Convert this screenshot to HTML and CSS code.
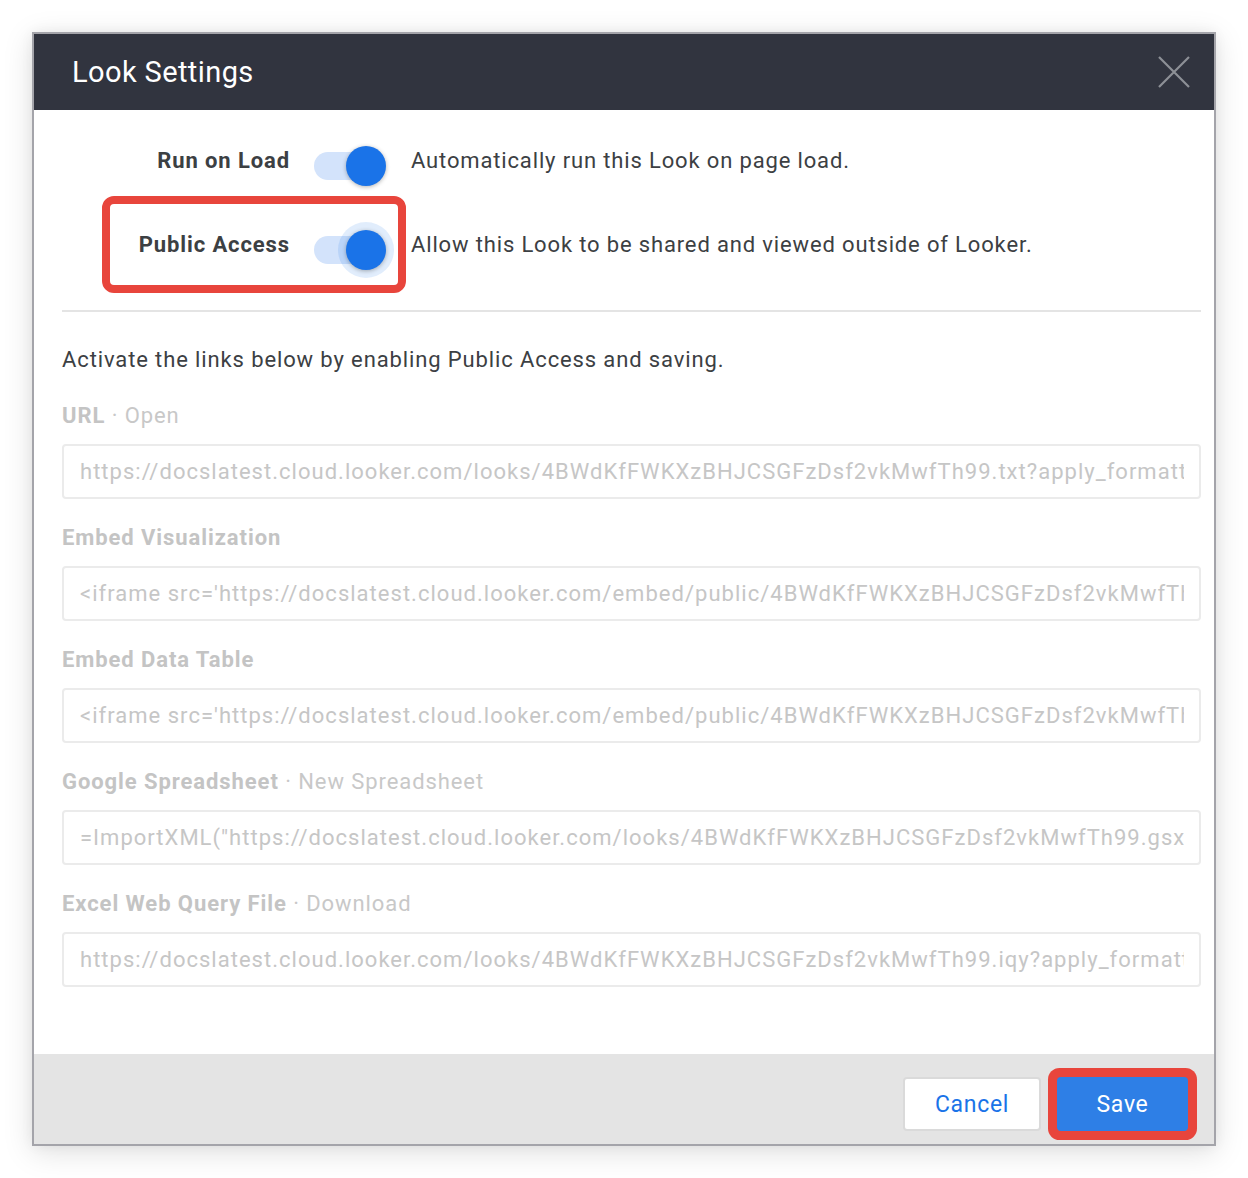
FILE: index.html
```html
<!DOCTYPE html>
<html lang="en">
<head>
<meta charset="utf-8">
<title>Look Settings</title>
<link rel="stylesheet" href="styles.css">
</head>
<body>
<div class="dialog">
  <header class="dialog-header">
    <h1 class="dialog-title">Look Settings</h1>
    <button class="close-btn" aria-label="Close">
      <svg width="32" height="32" viewBox="0 0 32 32"><path d="M1 1 L31 31 M31 1 L1 31" stroke="#8d9096" stroke-width="2.2" fill="none"/></svg>
    </button>
  </header>
  <main class="dialog-body">
    <div class="toggle-row">
      <div class="toggle-label">Run on Load</div>
      <div class="toggle"><span class="track"></span><span class="knob"></span></div>
      <div class="toggle-desc">Automatically run this Look on page load.</div>
    </div>
    <div class="toggle-row highlighted">
      <div class="toggle-label">Public Access</div>
      <div class="toggle focused"><span class="track"></span><span class="knob"></span></div>
      <div class="toggle-desc">Allow this Look to be shared and viewed outside of Looker.</div>
    </div>
    <hr class="divider">
    <p class="note">Activate the links below by enabling Public Access and saving.</p>
    <div class="field">
      <div class="field-label"><strong>URL</strong> · Open</div>
      <input class="field-input" readonly value="https://docslatest.cloud.looker.com/looks/4BWdKfFWKXzBHJCSGFzDsf2vkMwfTh99.txt?apply_formatting=true">
    </div>
    <div class="field">
      <div class="field-label"><strong>Embed Visualization</strong></div>
      <input class="field-input" readonly value="&lt;iframe src='https://docslatest.cloud.looker.com/embed/public/4BWdKfFWKXzBHJCSGFzDsf2vkMwfTh99' width='600' height='338' frameborder='0'&gt;&lt;/iframe&gt;">
    </div>
    <div class="field">
      <div class="field-label"><strong>Embed Data Table</strong></div>
      <input class="field-input" readonly value="&lt;iframe src='https://docslatest.cloud.looker.com/embed/public/4BWdKfFWKXzBHJCSGFzDsf2vkMwfTh99.html' width='600' height='338' frameborder='0'&gt;&lt;/iframe&gt;">
    </div>
    <div class="field">
      <div class="field-label"><strong>Google Spreadsheet</strong> · New Spreadsheet</div>
      <input class="field-input" readonly value="=ImportXML(&quot;https://docslatest.cloud.looker.com/looks/4BWdKfFWKXzBHJCSGFzDsf2vkMwfTh99.gsx">
    </div>
    <div class="field">
      <div class="field-label"><strong>Excel Web Query File</strong> · Download</div>
      <input class="field-input" readonly value="https://docslatest.cloud.looker.com/looks/4BWdKfFWKXzBHJCSGFzDsf2vkMwfTh99.iqy?apply_formatting=true">
    </div>
  </main>
  <footer class="dialog-footer">
    <button class="btn btn-cancel">Cancel</button>
    <button class="btn btn-save">Save</button>
  </footer>
</div>
</body>
</html>
```
FILE: styles.css
```css
*, *::before, *::after { box-sizing: border-box; }
html, body { margin: 0; background: #ffffff; }
body {
  padding: 32px;
  font-family: Roboto, "Liberation Sans", Arial, sans-serif;
  color: #3c4043;
}
.dialog {
  width: 1184px;
  height: 1114px;
  border: 2px solid #a4a4aa;
  background: #ffffff;
  display: flex;
  flex-direction: column;
  box-shadow: 0 6px 28px rgba(0, 0, 0, 0.13), 0 0 12px rgba(0, 0, 0, 0.05);
}
.dialog-header {
  height: 76px;
  flex: none;
  background: #31343f;
  display: flex;
  align-items: center;
  justify-content: space-between;
  padding: 0 24px 0 38px;
}
.dialog-title {
  margin: 0;
  font-family: Roboto, "Open Sans", sans-serif;
  font-weight: 400;
  font-size: 29px;
  color: #ffffff;
  letter-spacing: 0.4px;
}
.close-btn {
  background: none;
  border: 0;
  padding: 0;
  width: 32px;
  height: 32px;
  display: block;
  cursor: pointer;
}
.close-btn svg { display: block; }
.dialog-body {
  flex: 1;
  padding: 22px 13px 0 28px;
}
.toggle-row {
  position: relative;
  display: flex;
  align-items: center;
  height: 56px;
}
.toggle-row + .toggle-row { margin-top: 28px; }
.toggle-label {
  width: 228px;
  text-align: right;
  font-weight: 700;
  font-size: 22px;
  letter-spacing: 0.9px;
  color: #3c4043;
}
.toggle {
  display: flex;
  align-items: center;
  width: 72px;
  margin-left: 24px;
  margin-top: 12px;
}
.track {
  width: 58px;
  height: 28px;
  border-radius: 14px;
  background: #d3e3fb;
  flex: none;
}
.knob {
  width: 40px;
  height: 40px;
  border-radius: 50%;
  background: #1a73e8;
  margin-left: -26px;
  flex: none;
  box-shadow: 0 1px 4px rgba(0, 0, 0, 0.3);
}
.toggle.focused .knob {
  box-shadow: 0 1px 4px rgba(0, 0, 0, 0.3), 0 0 0 8px rgba(26, 115, 232, 0.13);
}
.toggle-desc {
  margin-left: 25px;
  font-size: 22px;
  letter-spacing: 0.85px;
  color: #3c4043;
}
.highlighted::before {
  content: "";
  position: absolute;
  left: 40px;
  top: -20px;
  width: 304px;
  height: 97px;
  border: 8px solid #e8453c;
  border-radius: 12px;
  pointer-events: none;
}
.divider {
  border: 0;
  height: 2px;
  background: #e4e4e4;
  margin: 38px 0 0 0;
}
.note {
  margin: 34px 0 28px 0;
  font-size: 22px;
  line-height: 28px;
  letter-spacing: 0.88px;
  color: #3c4043;
}
.field { margin-bottom: 25px; }
.field-label {
  font-size: 22px;
  line-height: 28px;
  letter-spacing: 0.92px;
  color: #c8c8c8;
  margin-bottom: 14px;
}
.field-label strong { font-weight: 700; color: #c4c4c4; }
.field-input {
  display: block;
  width: 100%;
  height: 55px;
  border: 2px solid #ebebeb;
  border-radius: 4px;
  padding: 0 15px 0 16px;
  font-family: Roboto, "Liberation Sans", Arial, sans-serif;
  font-size: 22px;
  letter-spacing: 1.02px;
  color: #c6c6c6;
  background: #ffffff;
  outline: none;
}
.dialog-footer {
  height: 90px;
  flex: none;
  background: #e4e4e4;
  display: flex;
  justify-content: flex-end;
  align-items: flex-start;
  gap: 16px;
  padding: 23px 26px 0 0;
}
.btn {
  height: 54px;
  border-radius: 4px;
  font-family: Roboto, "Liberation Sans", Arial, sans-serif;
  font-size: 23px;
  letter-spacing: 0.7px;
  cursor: pointer;
}
.btn-cancel {
  width: 138px;
  background: #ffffff;
  border: 2px solid #dadada;
  color: #1a73e8;
}
.btn-save {
  width: 131px;
  background: #2e7fe6;
  border: 0;
  color: #ffffff;
  box-shadow: 0 0 0 9px #e8453c;
  border-radius: 4px;
}
```
